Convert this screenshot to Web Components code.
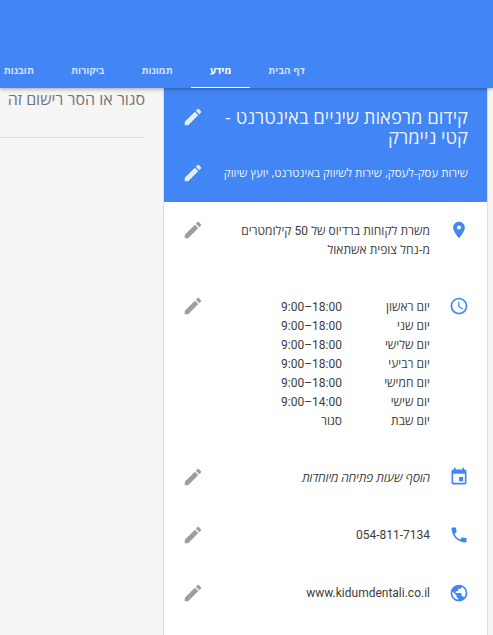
<!DOCTYPE html>
<html lang="he" dir="rtl">
<head>
<meta charset="utf-8">
<title>מידע</title>
<style>
  html, body { margin: 0; height: 100%; overflow: hidden; }
  body { font-family: "Open Sans", "Liberation Sans", sans-serif; background: #f5f5f5; }
  .num { font-family: Roboto, "Liberation Sans", sans-serif; }
  span.num { line-height: 1; }
  svg[slot="icon"] { width: 20px; height: 20px; fill: #4285f4; display: block; }
</style>
</head>
<body>
<top-bar>
  <tab-item>דף הבית</tab-item>
  <tab-item active>מידע</tab-item>
  <tab-item>תמונות</tab-item>
  <tab-item>ביקורות</tab-item>
  <tab-item>תובנות</tab-item>
</top-bar>
<page-main>
  <info-card>
    <card-head>
      <head-line big>קידום מרפאות שיניים באינטרנט - קטי ניימרק</head-line>
      <head-line>שירות עסק-לעסק, שירות לשיווק באינטרנט, יועץ שיווק</head-line>
    </card-head>
    <info-row>
      <svg slot="icon" viewBox="0 0 24 24"><path d="M12 2C8.13 2 5 5.13 5 9c0 5.25 7 13 7 13s7-7.75 7-13c0-3.87-3.13-7-7-7zm0 9.5a2.5 2.5 0 0 1 0-5 2.5 2.5 0 0 1 0 5z"/></svg>
      <div>משרת לקוחות ברדיוס של <span class="num">50</span> קילומטרים<br>מ-נחל צופית אשתאול</div>
    </info-row>
    <info-row>
      <svg slot="icon" viewBox="0 0 24 24"><path d="M11.99 2C6.47 2 2 6.48 2 12s4.47 10 9.99 10C17.52 22 22 17.52 22 12S17.52 2 11.99 2zM12 20c-4.42 0-8-3.58-8-8s3.58-8 8-8 8 3.58 8 8-3.58 8-8 8zm.5-13H11v6l5.25 3.15.75-1.23-4.5-2.67z"/></svg>
      <hours-table>
        <hours-line day="יום ראשון"><span class="num">9:00–18:00</span></hours-line>
        <hours-line day="יום שני"><span class="num">9:00–18:00</span></hours-line>
        <hours-line day="יום שלישי"><span class="num">9:00–18:00</span></hours-line>
        <hours-line day="יום רביעי"><span class="num">9:00–18:00</span></hours-line>
        <hours-line day="יום חמישי"><span class="num">9:00–18:00</span></hours-line>
        <hours-line day="יום שישי"><span class="num">9:00–14:00</span></hours-line>
        <hours-line day="יום שבת">סגור</hours-line>
      </hours-table>
    </info-row>
    <info-row>
      <svg slot="icon" viewBox="0 0 24 24"><path d="M17 12h-5v5h5v-5zM16 1v2H8V1H6v2H5c-1.11 0-1.99.9-1.99 2L3 19c0 1.1.89 2 2 2h14c1.1 0 2-.9 2-2V5c0-1.1-.9-2-2-2h-1V1h-2zm3 18H5V8h14v11z"/></svg>
      <div style="font-style: italic">הוסף שעות פתיחה מיוחדות</div>
    </info-row>
    <info-row>
      <svg slot="icon" viewBox="0 0 24 24"><path d="M6.62 10.79c1.44 2.83 3.76 5.14 6.59 6.59l2.2-2.2c.27-.27.67-.36 1.02-.24 1.12.37 2.33.57 3.57.57.55 0 1 .45 1 1V20c0 .55-.45 1-1 1-9.39 0-17-7.61-17-17 0-.55.45-1 1-1h3.5c.55 0 1 .45 1 1 0 1.25.2 2.45.57 3.57.11.35.03.74-.25 1.02l-2.2 2.2z"/></svg>
      <div class="num">054-811-7134</div>
    </info-row>
    <info-row>
      <svg slot="icon" viewBox="0 0 24 24"><path d="M12 2C6.48 2 2 6.48 2 12s4.48 10 10 10 10-4.48 10-10S17.52 2 12 2zm-1 17.93c-3.95-.49-7-3.85-7-7.93 0-.62.08-1.21.21-1.79L9 15v1c0 1.1.9 2 2 2v1.93zm6.9-2.54c-.26-.81-1-1.39-1.9-1.39h-1v-3c0-.55-.45-1-1-1H8v-2h2c.55 0 1-.45 1-1V7h2c1.1 0 2-.9 2-2v-.41c2.93 1.19 5 4.06 5 7.41 0 2.08-.8 3.97-2.1 5.39z"/></svg>
      <div class="num" dir="ltr" style="text-align: right">www.kidumdentali.co.il</div>
    </info-row>
  </info-card>
  <side-panel>סגור או הסר רישום זה</side-panel>
</page-main>
<script>
const PENCIL = `<svg class="pencil" viewBox="0 0 24 24"><path d="M3 17.25V21h3.75L17.81 9.94l-3.75-3.75L3 17.25zM20.71 7.04c.39-.39.39-1.02 0-1.41l-2.34-2.34c-.39-.39-1.02-.39-1.41 0l-1.83 1.83 3.75 3.75 1.83-1.83z"/></svg>`;

class Base extends HTMLElement {
  constructor() {
    super();
    this.attachShadow({ mode: "open" });
  }

  connectedCallback() {
    this.shadowRoot.innerHTML = `<style>${this.constructor.styles}</style>${this.markup()}`;
  }

  markup() {
    return `<slot></slot>`;
  }
}

class TopBar extends Base {
  static styles = `
    :host {
      display: flex;
      align-items: flex-end;
      height: 88px;
      box-sizing: border-box;
      padding-right: 169.5px;
      background: #4285f4;
      box-shadow: 0 1px 4px rgba(0, 0, 0, .35);
      position: relative;
      z-index: 2;
      overflow: hidden;
    }
  `;
}

class TabItem extends Base {
  static styles = `
    :host {
      display: block;
      flex: none;
      box-sizing: border-box;
      height: 36px;
      line-height: 36px;
      padding: 0 18.5px;
      font-size: 10px;
      font-weight: 700;
      color: rgba(255, 255, 255, .75);
      border-bottom: 1px solid transparent;
      white-space: nowrap;
    }
    :host([active]) {
      color: #fff;
      border-bottom-color: #fff;
    }
  `;
}

class PageMain extends Base {
  static styles = `
    :host {
      display: flex;
      height: 547px;
      padding-right: 6px;
    }
  `;
}

class InfoCard extends Base {
  static styles = `
    :host {
      display: block;
      flex: none;
      width: 323px;
      background: #fff;
      border: solid #ddd;
      border-width: 0 1px;
      margin-right: -1px;
      color: #3c3c3c;
      font-size: 12px;
      line-height: 19px;
    }
  `;
}

class CardHead extends Base {
  static styles = `
    :host {
      display: block;
      height: 114px;
      box-sizing: border-box;
      padding-top: 19px;
      margin-bottom: 19px;
      background: #4285f4;
      color: rgba(255, 255, 255, .92);
    }
  `;
}

class HeadLine extends Base {
  static styles = `
    :host {
      display: flex;
      justify-content: space-between;
      align-items: flex-start;
      padding: 0 19px 0 18px;
      font-size: 11.5px;
      line-height: 20px;
      margin-top: 17px;
    }
    :host([big]) {
      font-size: 18.4px;
      line-height: 19.5px;
      margin-top: 0;
    }
    .text { flex: 1; }
    .pencil { flex: none; width: 22px; height: 22px; margin-top: -1px; fill: rgba(255, 255, 255, .85); }
  `;

  markup() {
    return `<div class="text"><slot></slot></div>${PENCIL}`;
  }
}

class InfoRow extends Base {
  static styles = `
    :host {
      display: flex;
      align-items: flex-start;
      margin-bottom: 38px;
      padding: 0 18px;
    }
    .icon { flex: none; width: 20px; height: 20px; margin: -1px 0 0 19px; }
    .text { flex: 1; min-width: 0; }
    .pencil { flex: none; width: 22px; height: 22px; margin-top: -2px; fill: #9e9e9e; }
  `;

  markup() {
    return `<div class="icon"><slot name="icon"></slot></div><div class="text"><slot></slot></div>${PENCIL}`;
  }
}

class HoursTable extends Base {
  static styles = `:host { display: block; }`;
}

class HoursLine extends Base {
  static styles = `
    :host { display: flex; }
    .day { width: 88px; flex: none; }
    .time { unicode-bidi: plaintext; }
  `;

  markup() {
    return `<div class="day">${this.getAttribute("day") ?? ""}</div><div class="time"><slot></slot></div>`;
  }
}

class SidePanel extends Base {
  static styles = `
    :host {
      display: block;
      flex: 1;
      min-width: 0;
      padding-top: 1px;
      color: #757575;
      font-size: 16px;
      line-height: 20px;
      white-space: nowrap;
    }
    .label {
      height: 48px;
      margin-right: 18px;
      border-bottom: 1px solid #ddd;
    }
  `;

  markup() {
    return `<div class="label"><slot></slot></div>`;
  }
}

customElements.define("top-bar", TopBar);
customElements.define("tab-item", TabItem);
customElements.define("page-main", PageMain);
customElements.define("info-card", InfoCard);
customElements.define("card-head", CardHead);
customElements.define("head-line", HeadLine);
customElements.define("info-row", InfoRow);
customElements.define("hours-table", HoursTable);
customElements.define("hours-line", HoursLine);
customElements.define("side-panel", SidePanel);
</script>
</body>
</html>
